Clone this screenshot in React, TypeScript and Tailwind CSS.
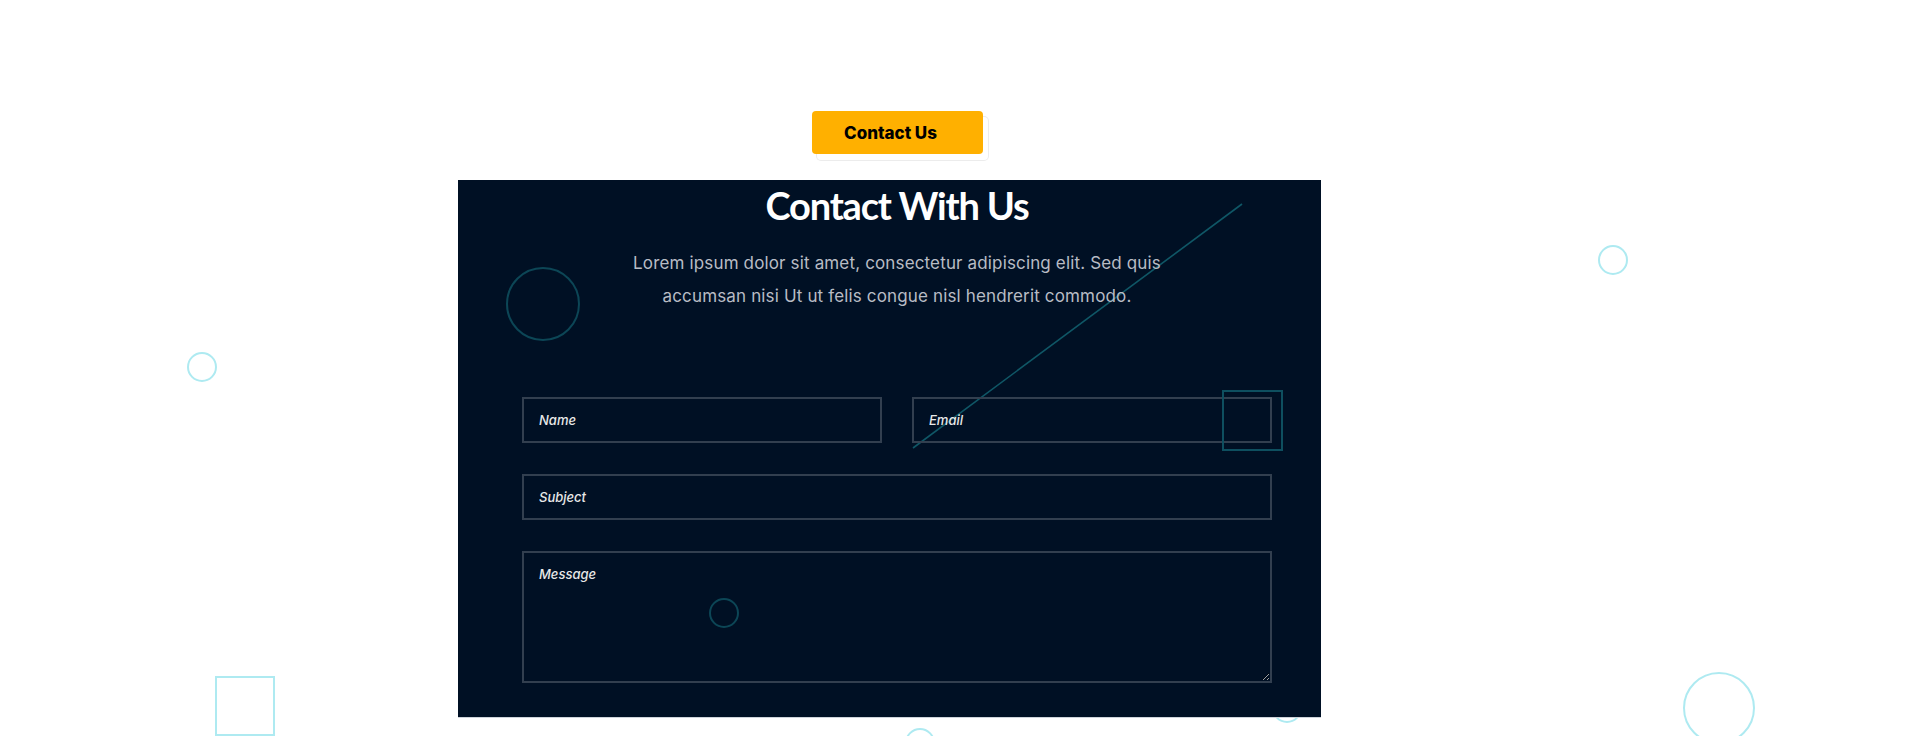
import React from "react";

export default function App() {
  const poppins = { fontFamily: "Inter, 'Noto Sans', sans-serif" };
  const field =
    "h-[46px] bg-transparent border-2 border-[#323f4f] pl-[15px] text-[13px] font-medium italic text-white placeholder:text-[#e8e8e8] outline-none";
  return (
    <div className="relative w-full h-[736px] bg-white overflow-hidden" style={poppins}>
      {/* outside decorative shapes */}
      <div className="absolute left-[187px] top-[352px] w-[30px] h-[30px] rounded-full border-2 border-[#aeeaf1]" />
      <div className="absolute left-[215px] top-[676px] w-[60px] h-[60px] border-2 border-[#aeeaf1]" />
      <div className="absolute left-[1598px] top-[245px] w-[30px] h-[30px] rounded-full border-2 border-[#aeeaf1]" />
      <div className="absolute left-[1683px] top-[672px] w-[72px] h-[72px] rounded-full border-2 border-[#aeeaf1]" />
      <div className="absolute left-[905px] top-[728px] w-[30px] h-[30px] rounded-full border-2 border-[#aeeaf1]" />
      <div className="absolute left-[1272px] top-[693px] w-[30px] h-[30px] rounded-full border-2 border-[#aeeaf1]" />

      <div className="relative ml-[458px] w-[863px] pt-[111px] flex flex-col">
        <div className="flex justify-center pl-[64px] pr-[49px]">
          <button className="w-[171px] h-[43px] pr-[13px] pt-[3px] rounded-[4px] bg-[#ffb000] text-black font-extrabold text-[17px] shadow-[5px_6px_0_0_#ffffff,5px_6px_0_1px_#ececec]">
            Contact Us
          </button>
        </div>

        <div className="relative mt-[26px] h-[537px] bg-[#001024] pl-[64px] pr-[49px] pt-[3px] flex flex-col shadow-[0_1px_0_#cdd3da]">
          {/* inner decorations */}
          <div className="absolute left-[48px] top-[87px] w-[74px] h-[74px] rounded-full border-2 border-[#0c4656]" />
          <div className="absolute left-[251px] top-[418px] w-[30px] h-[30px] rounded-full border-2 border-[#0c4656]" />
          <svg className="absolute left-0 top-0 pointer-events-none" width="863" height="537">
            <line x1="784" y1="24" x2="455" y2="268" stroke="#0f5766" strokeWidth="1.6" />
          </svg>

          <h1
            className="relative text-center text-white font-bold text-[38px] leading-[44px] tracking-[-1.2px]"
            style={{ fontFamily: "Lato, 'Noto Sans', sans-serif" }}
          >
            Contact With Us
          </h1>
          <p className="relative mt-[20px] text-center text-[#b8bcc4] text-[17px] leading-[33px] tracking-[0.15px]">
            Lorem ipsum dolor sit amet, consectetur adipiscing elit. Sed quis
            <br />
            accumsan nisi Ut ut felis congue nisl hendrerit commodo.
          </p>

          <form className="relative mt-[84px] flex flex-col gap-[31px]">
            <div className="flex gap-[30px]">
              <input placeholder="Name" className={`w-[360px] ${field}`} />
              <input placeholder="Email" className={`w-[360px] ${field}`} />
            </div>
            <input placeholder="Subject" className={`w-[750px] ${field}`} />
            <textarea
              placeholder="Message"
              className="w-[750px] h-[132px] bg-transparent border-2 border-[#323f4f] pl-[15px] pt-[12px] text-[13px] font-medium italic text-white placeholder:text-[#e8e8e8] outline-none"
            />
          </form>
          <div className="absolute left-[764px] top-[210px] w-[61px] h-[61px] border-2 border-[#0e4f5f] pointer-events-none" />
        </div>
      </div>
    </div>
  );
}
